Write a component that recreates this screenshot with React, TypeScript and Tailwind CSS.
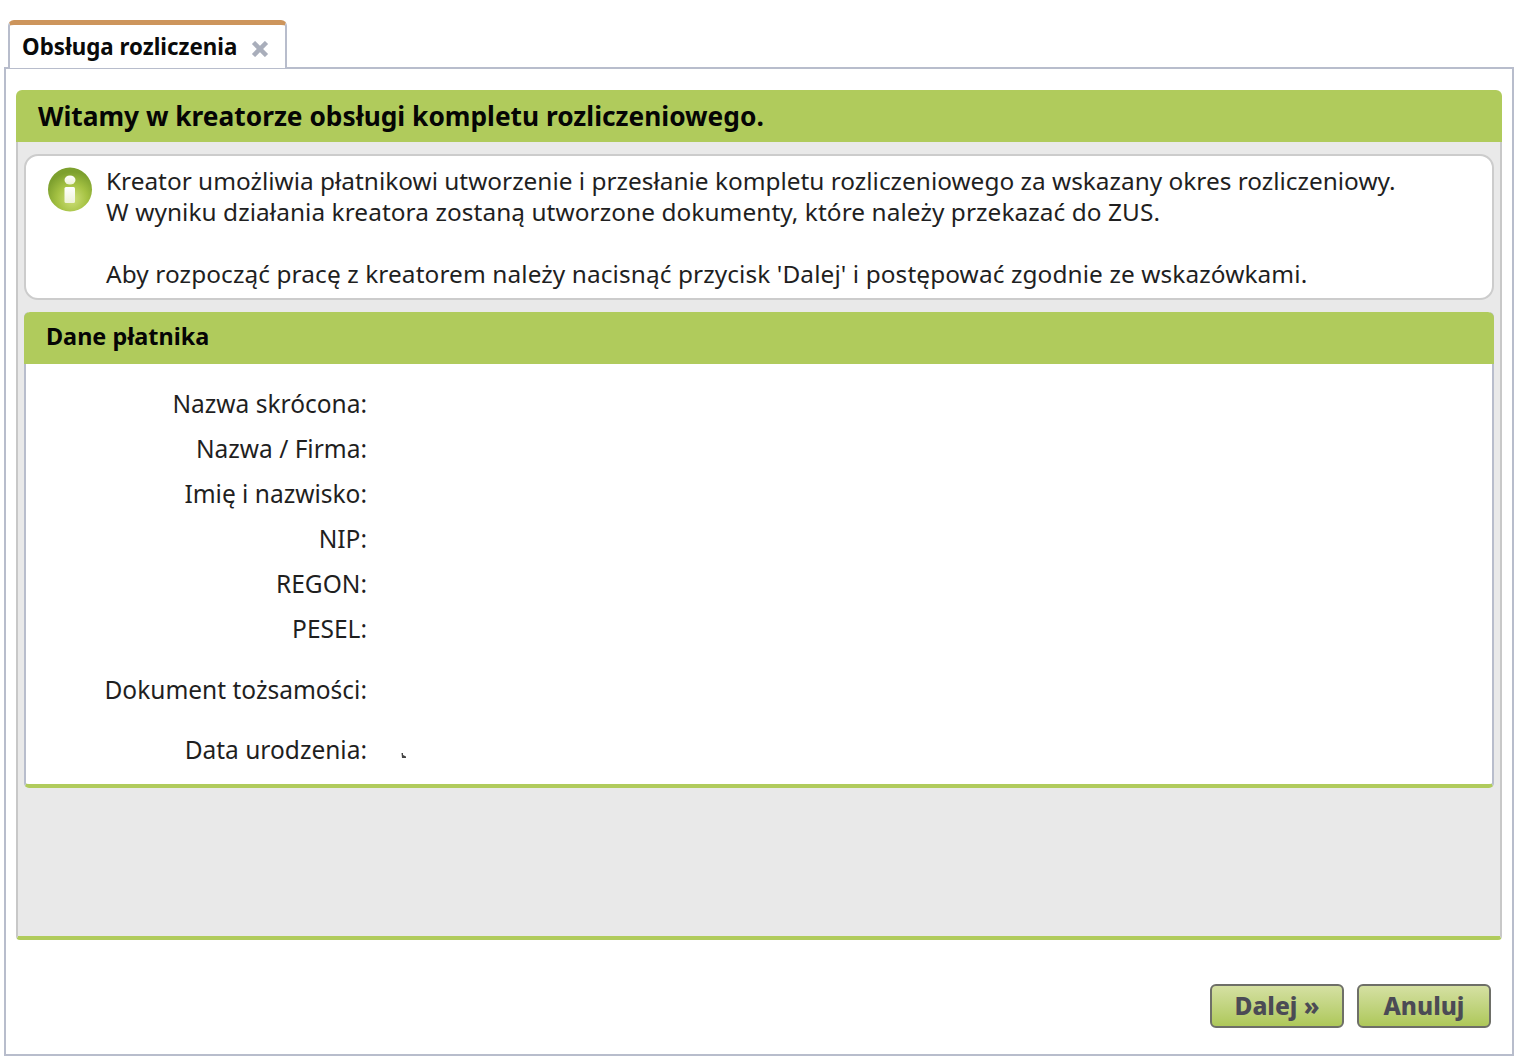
const labels = [
  { text: "Nazwa skrócona:", row: "h-[45px]" },
  { text: "Nazwa / Firma:", row: "h-[45px]" },
  { text: "Imię i nazwisko:", row: "h-[45px]" },
  { text: "NIP:", row: "h-[45px]" },
  { text: "REGON:", row: "h-[45px]" },
  { text: "PESEL:", row: "h-[45px]" },
  { text: "Dokument tożsamości:", row: "h-[61px] pt-[16px]" },
  { text: "Data urodzenia:", row: "h-[60px] pt-[15px]" },
];

function InfoIcon() {
  return (
    <svg width="46" height="46" viewBox="0 0 46 46" className="mt-[2px] shrink-0">
      <defs>
        <radialGradient id="infoBg" cx="55%" cy="72%" r="62%">
          <stop offset="0%" stopColor="#cfe07a" />
          <stop offset="55%" stopColor="#a5c243" />
          <stop offset="100%" stopColor="#7da02e" />
        </radialGradient>
        <linearGradient id="infoI" x1="0" y1="0" x2="0" y2="1">
          <stop offset="0%" stopColor="#ffffff" />
          <stop offset="100%" stopColor="#eef3d6" />
        </linearGradient>
      </defs>
      <circle cx="23" cy="22.5" r="22" fill="url(#infoBg)" />
      <ellipse cx="23" cy="13" rx="5.5" ry="4.5" fill="url(#infoI)" />
      <rect x="17.5" y="20" width="10.5" height="16" rx="1.5" fill="url(#infoI)" />
    </svg>
  );
}

function Btn({ children }: { children: React.ReactNode }) {
  return (
    <button className="h-[44px] w-[134px] rounded-[6px] border-2 border-[#6e6f68] bg-gradient-to-b from-[#d5e0a2] to-[#aec859] text-[24.5px] font-extrabold text-[#4b4b55]">
      {children}
    </button>
  );
}

export default function App() {
  return (
    <div className="h-[1060px] w-[1522px] bg-white pt-[20px] pl-[4px] font-['Noto_Sans',sans-serif] text-[24.4px] text-[#1f1f1f]">
      {/* Tab */}
      <div className="relative z-10 ml-[4px] -mb-[1px] flex h-[48px] w-[279px] items-center rounded-t-[6px] border-x-2 border-t-[5px] border-x-[#b8bdcc] border-t-[#cd955c] bg-white pl-[12px]">
        <span className="pt-[1px] text-[22.3px] font-bold text-[#0a0a0a]">Obsługa rozliczenia</span>
        <svg width="18" height="16" viewBox="0 0 18 16" className="ml-[14px] mt-[4px]">
          <path d="M2.5 1.5 L15.5 14.5 M15.5 1.5 L2.5 14.5" stroke="#a9aebb" strokeWidth="4.5" />
        </svg>
      </div>

      {/* Panel */}
      <div className="flex h-[989px] w-[1510px] flex-col border-2 border-[#b8bdcc] px-[10px] pt-[21px]">
        <div className="flex h-[52px] items-center rounded-t-[6px] bg-[#b0cb5c] pl-[22px] pt-[2px] text-[26.3px] font-bold text-[#050505]">
          Witamy w kreatorze obsługi kompletu rozliczeniowego.
        </div>

        <div className="flex h-[798px] flex-col rounded-b-[4px] border-x-2 border-b-[4px] border-x-[#c8c8c8] border-b-[#b0cb5c] bg-[#e9e9e9] px-[6px] pt-[12px]">
          {/* Info */}
          <div className="flex h-[146px] gap-[13px] rounded-[14px] border-2 border-[#cccccc] bg-white pl-[21px] pt-[9px]">
            <InfoIcon />
            <div className="leading-[31px]">
              <p>Kreator umożliwia płatnikowi utworzenie i przesłanie kompletu rozliczeniowego za wskazany okres rozliczeniowy.</p>
              <p className="tracking-[0.07px]">W wyniku działania kreatora zostaną utworzone dokumenty, które należy przekazać do ZUS.</p>
              <p className="mt-[31px] tracking-[0.1px]">Aby rozpocząć pracę z kreatorem należy nacisnąć przycisk 'Dalej' i postępować zgodnie ze wskazówkami.</p>
            </div>
          </div>

          {/* Dane platnika */}
          <div className="mt-[12px] flex h-[476px] flex-col rounded-[5px] border-x-2 border-b-[4px] border-x-[#b8bdcc] border-b-[#b0cb5c] bg-white">
            <div className="-mx-[2px] flex h-[52px] shrink-0 items-center rounded-t-[6px] bg-[#b0cb5c] pb-[3px] pl-[22px] text-[23.4px] font-bold text-[#050505]">
              Dane płatnika
            </div>
            <div className="pt-[17px]">
              {labels.map((l) => (
                <div key={l.text} className={`flex ${l.row}`}>
                  <div className="w-[341px] text-right text-[24.5px] leading-[45px]">{l.text}</div>
                  {l.text === "Data urodzenia:" && (
                    <svg width="6" height="6" viewBox="0 0 6 6" className="ml-[34px] mt-[26px]">
                      <path d="M0.5 0 L2 0 L2 2 L5 3.5 L5 5 L1 5 Z" fill="#444444" />
                    </svg>
                  )}
                </div>
              ))}
            </div>
          </div>
        </div>

        {/* Buttons */}
        <div className="mt-[44px] flex justify-end gap-[13px] pr-[11px]">
          <Btn>Dalej »</Btn>
          <Btn>Anuluj</Btn>
        </div>
      </div>
    </div>
  );
}
